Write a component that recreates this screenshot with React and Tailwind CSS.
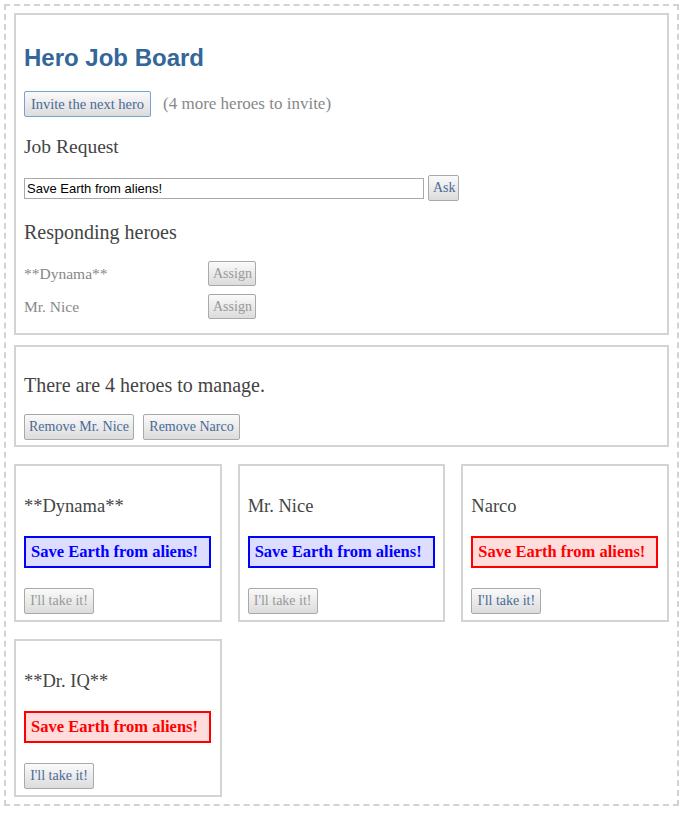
import React from "react";

const serif = { fontFamily: '"Liberation Serif", "Times New Roman", serif' };

function Btn({ children, className = "", disabled = false, focus = false }) {
  return (
    <button
      className={`px-[4px] border rounded-[2px] bg-gradient-to-b from-[#fafafa] to-[#dcdcdc] leading-none whitespace-nowrap ${
        focus ? "border-[#7aa0d8]" : "border-[#a9a9a9]"
      } ${disabled ? "text-[#999]" : "text-[#4a6a98]"} ${className}`}
      style={serif}
    >
      {children}
    </button>
  );
}

function HeroCard({ name, red, disabled }) {
  return (
    <div className="border-2 border-[#d3d3d3] bg-white px-[8px] h-[158px] flex flex-col shrink-0">
      <div className="mt-[28px] text-[18.5px] text-[#444] leading-[24px]" style={serif}>
        {name}
      </div>
      <div
        className={`mt-[18px] w-[187px] h-[32px] border-2 flex items-center pl-[5px] font-bold text-[16.5px] whitespace-nowrap ${
          red ? "border-[#ff0000] bg-[#ffdddd] text-[#ff0000]" : "border-[#0000ff] bg-[#ddddff] text-[#0000ff]"
        }`}
        style={serif}
      >
        Save Earth from aliens!
      </div>
      <div className="mt-[19px]">
        <Btn disabled={disabled} className="h-[26px] w-[70px] text-[14px]">
          I'll take it!
        </Btn>
      </div>
    </div>
  );
}

export default function App() {
  return (
    <div className="bg-white min-h-[813px] pt-[4px] pl-[4px]">
      <div className="w-[675px] border-2 border-dashed border-[#d3d3d3] pt-[7px] px-[8px] pb-[7px] flex flex-col">
        {/* Card 1 */}
        <div className="border-2 border-[#d3d3d3] h-[322px] px-[8px] flex flex-col shrink-0">
          <h1
            className="mt-[29px] text-[24px] font-bold text-[#336699] leading-[28px]"
            style={{ fontFamily: '"Liberation Sans", Arial, sans-serif' }}
          >
            Hero Job Board
          </h1>
          <div className="mt-[19px] flex items-center">
            <Btn focus className="h-[26px] w-[127px] text-[14.5px]">
              Invite the next hero
            </Btn>
            <span className="ml-[12px] text-[17px] text-[#888]" style={serif}>
              (4 more heroes to invite)
            </span>
          </div>
          <div className="mt-[18px] text-[19.5px] text-[#444] leading-[24px]" style={serif}>
            Job Request
          </div>
          <div className="mt-[16px] flex items-center">
            <input
              readOnly
              value="Save Earth from aliens!"
              className="w-[400px] h-[21px] border border-[#a9a9a9] px-[2px] text-[13px] text-black outline-none"
              style={{ fontFamily: '"Liberation Sans", Arial, sans-serif' }}
            />
            <Btn className="ml-[4px] h-[26px] w-[31px] text-[14px]">Ask</Btn>
          </div>
          <div className="mt-[19px] text-[20px] text-[#444] leading-[24px]" style={serif}>
            Responding heroes
          </div>
          <div className="mt-[17px] flex items-center h-[25px]">
            <span className="w-[184px] text-[15.5px] text-[#888]" style={serif}>
              **Dynama**
            </span>
            <Btn disabled className="h-[25px] w-[48px] text-[14px]">Assign</Btn>
          </div>
          <div className="mt-[8px] flex items-center h-[25px]">
            <span className="w-[184px] text-[15.5px] text-[#888]" style={serif}>
              Mr. Nice
            </span>
            <Btn disabled className="h-[25px] w-[48px] text-[14px]">Assign</Btn>
          </div>
        </div>

        {/* Card 2 */}
        <div className="mt-[10px] border-2 border-[#d3d3d3] h-[102px] px-[8px] flex flex-col shrink-0">
          <div className="mt-[26px] text-[20px] text-[#444] leading-[24px]" style={serif}>
            There are 4 heroes to manage.
          </div>
          <div className="mt-[17px] flex items-center gap-[9px]">
            <Btn className="h-[26px] w-[110px] text-[14px]">Remove Mr. Nice</Btn>
            <Btn className="h-[26px] w-[97px] text-[14px]">Remove Narco</Btn>
          </div>
        </div>

        {/* Hero cards */}
        <div className="mt-[17px] grid grid-cols-3 gap-x-[16px] gap-y-[17px]">
          <HeroCard name="**Dynama**" disabled />
          <HeroCard name="Mr. Nice" disabled />
          <HeroCard name="Narco" red />
          <HeroCard name="**Dr. IQ**" red />
        </div>
      </div>
    </div>
  );
}
